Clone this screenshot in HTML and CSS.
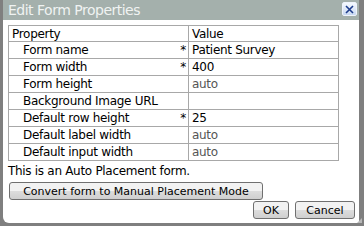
FILE: index.html
```html
<!DOCTYPE html>
<html lang="en">
<head>
  <meta charset="UTF-8">
  <title>Edit Form Properties</title>
  <link rel="stylesheet" href="styles.css">
</head>
<body>
  <div class="dialog">
    <div class="titlebar">
      <span class="title">Edit Form Properties</span>
      <span class="close">
        <svg width="9" height="9" viewBox="0 0 9 9"><path d="M1 1L8 8M8 1L1 8" stroke="#1c3c8c" stroke-width="1.6"/></svg>
      </span>
    </div>
    <div class="content">
      <table class="props">
        <tr class="head">
          <th class="first">Property</th>
          <th>Value</th>
        </tr>
        <tr>
          <td class="label">Form name <span class="req">*</span></td>
          <td>Patient Survey</td>
        </tr>
        <tr>
          <td class="label">Form width <span class="req">*</span></td>
          <td>400</td>
        </tr>
        <tr>
          <td class="label">Form height</td>
          <td class="dim">auto</td>
        </tr>
        <tr>
          <td class="label">Background Image URL</td>
          <td></td>
        </tr>
        <tr>
          <td class="label">Default row height <span class="req">*</span></td>
          <td>25</td>
        </tr>
        <tr>
          <td class="label">Default label width</td>
          <td class="dim">auto</td>
        </tr>
        <tr>
          <td class="label">Default input width</td>
          <td class="dim">auto</td>
        </tr>
      </table>
      <p class="note">This is an Auto Placement form.</p>
      <button class="btn convert">Convert form to Manual Placement Mode</button>
      <div class="actions">
        <button class="btn ok">OK</button>
        <button class="btn cancel">Cancel</button>
      </div>
      <span class="grip"></span>
    </div>
  </div>
</body>
</html>
```
FILE: styles.css
```css
body {
  margin: 0;
  font-family: "DejaVu Sans", Verdana, sans-serif;
  font-size: 12px;
  letter-spacing: -0.3px;
  color: #000;
}

.dialog {
  width: 364px;
  height: 226px;
  box-sizing: border-box;
  background: #7f7f7f;
  padding: 0 5px 3px 3px;
  display: flex;
  flex-direction: column;
}

.titlebar {
  height: 20px;
  flex-shrink: 0;
  background: #a4b0ac;
  display: flex;
  align-items: center;
  justify-content: space-between;
  padding: 0 2px 0 5px;
}

.title {
  color: #f0f3f2;
  font-size: 14px;
  letter-spacing: -0.5px;
}

.close {
  width: 13px;
  height: 12px;
  margin-top: -2px;
  border: 1px solid #eef3fb;
  border-radius: 2px;
  background: linear-gradient(#f4f8fe, #c9d9f2);
  display: flex;
  align-items: center;
  justify-content: center;
}

.content {
  flex: 1;
  background: #fff;
  border-bottom-left-radius: 6px;
  padding: 5px 4px 0 5px;
  position: relative;
}

.props {
  border-collapse: collapse;
  table-layout: fixed;
  width: 331px;
}

.props tr {
  height: 17px;
}

.props tr.head {
  height: 16px;
}

.props th,
.props td {
  border: 1px solid #a8a8a8;
  padding: 0 0 0 3px;
  text-align: left;
  font-weight: normal;
  white-space: nowrap;
  line-height: 14px;
}

.props .first {
  width: 176px;
}

.props .label {
  padding-left: 14px;
  padding-right: 2px;
}

.req {
  float: right;
}

.props .dim {
  color: #555;
}

.note {
  margin: 3px 0 3px 0;
  line-height: 15px;
}

.btn {
  font-family: inherit;
  font-size: 11px;
  letter-spacing: 0;
  height: 18px;
  padding: 0;
  white-space: nowrap;
  border: 1px solid #707070;
  border-radius: 3px;
  background: linear-gradient(#f2f2f2 50%, #dddddd 50%, #cfcfcf);
  color: #000;
}

.convert {
  display: block;
  width: 254px;
  margin-left: 1px;
}

.actions {
  display: flex;
  justify-content: flex-end;
  gap: 6px;
  margin-top: 1px;
}

.ok {
  width: 36px;
}

.cancel {
  width: 60px;
}

.grip {
  position: absolute;
  right: -3px;
  bottom: 0;
  width: 0;
  height: 0;
  border-left: 5px solid transparent;
  border-bottom: 5px solid #b8b8b8;
}
```
